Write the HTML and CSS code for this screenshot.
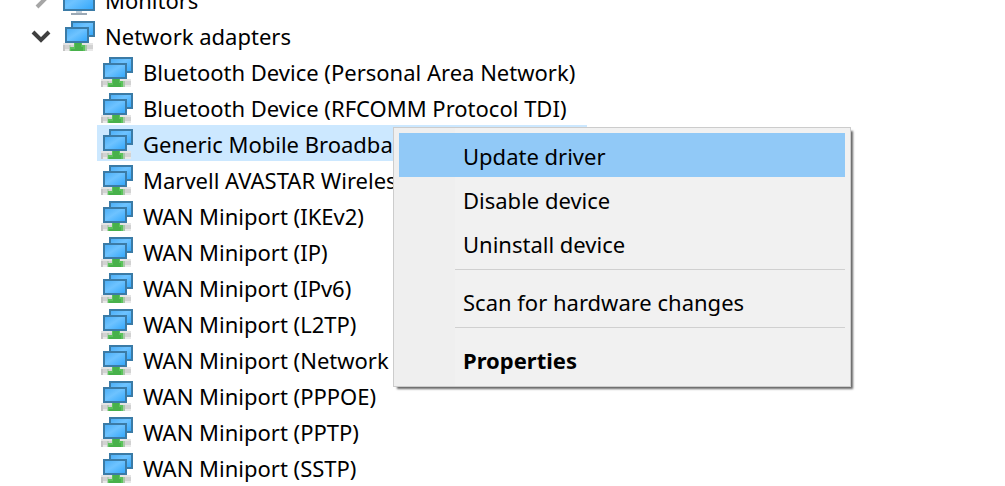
FILE: index.html
```html
<!DOCTYPE html>
<html lang="en">
<head>
<meta charset="utf-8">
<title>Device Manager</title>
<link rel="stylesheet" href="styles.css">
</head>
<body>
<svg class="defs" aria-hidden="true">
  <defs>
    <linearGradient id="glass" x1="0" y1="0" x2="1" y2="1">
      <stop offset="0" stop-color="#48acf5"/>
      <stop offset=".45" stop-color="#6ec3ff"/>
      <stop offset="1" stop-color="#2fa5fb"/>
    </linearGradient>
    <symbol id="net" viewBox="0 0 32 32">
      <rect x="9" y="3" width="22" height="14" fill="url(#glass)" stroke="#3b7ba6" stroke-width="2"/>
      <rect x="0" y="24" width="30" height="2" fill="#e4e4e4"/>
      <rect x="0" y="26" width="30" height="4" fill="#d2d2d2"/>
      <rect x="0" y="30" width="30" height="2" fill="#e8e8e8"/>
      <rect x="0" y="26" width="2" height="6" fill="#c4c4c4"/>
      <rect x="6" y="26" width="2" height="6" fill="#b5ccb5"/>
      <rect x="22" y="26" width="2" height="6" fill="#a9c9a9"/>
      <path d="M11 24h8v2h3v6H7v-4h4z" fill="#5cc35c"/>
      <path d="M12 24h6v4h2v4H8v-2h4z" fill="#48b14b"/>
      <rect x="3" y="9" width="22" height="14" fill="url(#glass)" stroke="#3b7ba6" stroke-width="2"/>
    </symbol>
    <symbol id="monitor" viewBox="0 0 32 32">
      <rect x="1" y="7" width="30" height="20" fill="url(#glass)" stroke="#3b7ba6" stroke-width="2"/>
      <rect x="13" y="28" width="6" height="2" fill="#c3d0da"/>
      <rect x="8" y="30" width="16" height="2" fill="#9ca9b5"/>
    </symbol>
  </defs>
</svg>
<main class="view">
  <ul class="tree">
    <li>
      <div class="row">
        <svg class="chevron" viewBox="0 0 20 20"><path d="M6 2l8 8-8 8" fill="none" stroke="#a6a6a6" stroke-width="4"/></svg>
        <svg class="icon"><use href="#monitor"/></svg>
        <span class="label">Monitors</span>
      </div>
    </li>
    <li>
      <div class="row">
        <svg class="chevron" viewBox="0 0 20 20"><path d="M2 7l8 8 8-8" fill="none" stroke="#404040" stroke-width="4"/></svg>
        <svg class="icon"><use href="#net"/></svg>
        <span class="label">Network adapters</span>
      </div>
      <ul class="children">
        <li class="row"><svg class="icon"><use href="#net"/></svg><span class="label">Bluetooth Device (Personal Area Network)</span></li>
        <li class="row"><svg class="icon"><use href="#net"/></svg><span class="label">Bluetooth Device (RFCOMM Protocol TDI)</span></li>
        <li class="row selected"><svg class="icon"><use href="#net"/></svg><span class="label">Generic Mobile Broadba</span></li>
        <li class="row"><svg class="icon"><use href="#net"/></svg><span class="label">Marvell AVASTAR Wireles</span></li>
        <li class="row"><svg class="icon"><use href="#net"/></svg><span class="label">WAN Miniport (IKEv2)</span></li>
        <li class="row"><svg class="icon"><use href="#net"/></svg><span class="label">WAN Miniport (IP)</span></li>
        <li class="row"><svg class="icon"><use href="#net"/></svg><span class="label">WAN Miniport (IPv6)</span></li>
        <li class="row"><svg class="icon"><use href="#net"/></svg><span class="label">WAN Miniport (L2TP)</span></li>
        <li class="row"><svg class="icon"><use href="#net"/></svg><span class="label">WAN Miniport (Network</span></li>
        <li class="row"><svg class="icon"><use href="#net"/></svg><span class="label">WAN Miniport (PPPOE)</span></li>
        <li class="row"><svg class="icon"><use href="#net"/></svg><span class="label">WAN Miniport (PPTP)</span></li>
        <li class="row"><svg class="icon"><use href="#net"/></svg><span class="label">WAN Miniport (SSTP)</span></li>
      </ul>
    </li>
  </ul>
  <div class="menu" role="menu">
    <button class="item active" role="menuitem">Update driver</button>
    <button class="item" role="menuitem">Disable device</button>
    <button class="item" role="menuitem">Uninstall device</button>
    <hr class="separator">
    <button class="item" role="menuitem">Scan for hardware changes</button>
    <hr class="separator">
    <button class="item default" role="menuitem">Properties</button>
  </div>
</main>
</body>
</html>
```
FILE: styles.css
```css
* {
  box-sizing: border-box;
}

body {
  margin: 0;
  background: #fff;
  color: #000;
  font: 22px/36px "Noto Sans", "Open Sans", sans-serif;
}

.defs {
  position: absolute;
  width: 0;
  height: 0;
}

.view {
  position: relative;
  height: 100vh;
  overflow: hidden;
}

.tree,
.children {
  margin: 0;
  padding: 0;
  list-style: none;
}

/* The list is scrolled, so its first row is partly out of view. */
.tree {
  margin-top: -19px;
  padding-left: 31px;
}

.children {
  display: flex;
  flex-direction: column;
  align-items: flex-start;
  padding-left: 66px;
}

.row {
  display: flex;
  align-items: center;
  height: 36px;
  padding-left: 4px;
  white-space: nowrap;
}

.tree > li > .row {
  padding-left: 0;
}

.selected {
  width: 490px;
  background: #cce8ff;
}

.chevron {
  width: 20px;
  height: 20px;
  margin-right: 12px;
}

.icon {
  flex: none;
  width: 32px;
  height: 32px;
  margin-right: 10px;
}

.label {
  padding-top: 2px;
}

.menu {
  position: absolute;
  top: 127px;
  left: 393px;
  width: 458px;
  padding: 5px;
  border: 1px solid #ccc;
  background: linear-gradient(90deg, #efefef 61px, #f1f1f1 61px);
  box-shadow: 3px 3px 2px -1px rgba(0, 0, 0, 0.6);
}

.item {
  display: block;
  width: 100%;
  height: 44px;
  padding: 1px 0 0 64px;
  border: 0;
  background: none;
  color: inherit;
  font: inherit;
  text-align: left;
}

.active {
  background: #91c9f7;
}

.default {
  font-weight: 700;
}

.separator {
  height: 1px;
  margin: 4px 0 9px 56px;
  border: 0;
  background: #d0d0d0;
}
```
